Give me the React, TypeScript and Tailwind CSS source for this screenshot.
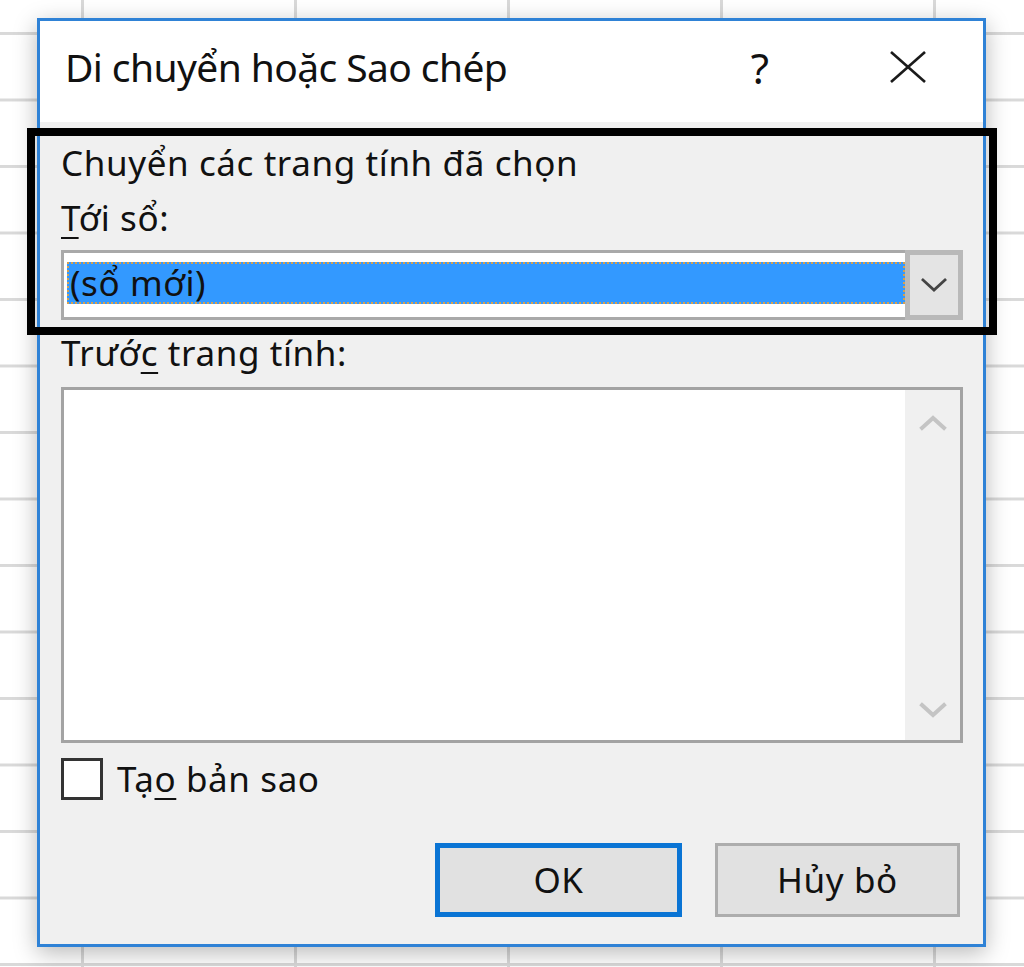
import React from "react";

function Chevron({ dir, className }: { dir: "up" | "down"; className: string }) {
  return (
    <svg viewBox="0 0 28 16" className={className} fill="none" strokeLinecap="square">
      <polyline points={dir === "down" ? "3,3 14,13 25,3" : "3,13 14,3 25,13"} />
    </svg>
  );
}

export default function App() {
  return (
    <div className="relative h-[967px] w-[1024px] overflow-hidden bg-white bg-[image:linear-gradient(to_right,#d9d9d9_3px,transparent_3px),linear-gradient(to_bottom,#d9d9d9_3px,transparent_3px)] bg-[length:213px_66.5px] bg-[position:81px_32px] pl-[37px] pt-[18px] font-['Noto_Sans',sans-serif] text-[#111]">
      <div className="flex h-[929px] w-[949px] flex-col border-[3px] border-[#2f82d6] bg-[#f0f0f0] shadow-[0_6px_22px_rgba(0,0,0,0.28)]">
        {/* title bar */}
        <div className="flex h-[101px] items-center bg-white pb-[10px] pl-[25px]">
          <span className="flex-1 text-[39px] leading-[48px] tracking-[-0.6px]">Di chuyển hoặc Sao chép</span>
          <span className="mr-[121px] mt-[2px] text-[42px] leading-[48px]">?</span>
          <svg viewBox="0 0 36 32" className="mr-[57px] h-[32px] w-[36px]" stroke="#1a1a1a" strokeWidth="2.6">
            <line x1="1" y1="1" x2="35" y2="31" />
            <line x1="35" y1="1" x2="1" y2="31" />
          </svg>
        </div>

        {/* body */}
        <div className="flex flex-1 flex-col pl-[21px] pr-[20px] pt-[21px] text-[35px] leading-[40px] tracking-[0.6px]">
          <div>Chuyển các trang tính đã chọn</div>
          <div className="mt-[15px]">
            <span className="underline decoration-2 underline-offset-[6px]">T</span>ới sổ:
          </div>

          <div className="mt-[12px] flex h-[70px]">
            <div className="flex flex-1 border-y-[3px] border-l-[3px] border-[#a9a9a9] bg-white pl-[3px] pt-[9px]">
              <div className="flex h-[42px] flex-1 items-center border-2 border-dotted border-[#d8a04e] bg-[#3399ff] pl-[1px] leading-[40px]">
                (sổ mới)
              </div>
            </div>
            <div className="flex w-[58px] items-center justify-center border-[5px] border-[#b9b9b9] bg-[#e4e4e4]">
              <Chevron dir="down" className="h-[16px] w-[28px] stroke-[#444] stroke-[2.8]" />
            </div>
          </div>

          <div className="mt-[13px]">
            Trướ<span className="underline decoration-2 underline-offset-[6px]">c</span> trang tính:
          </div>

          <div className="mt-[14px] flex h-[356px] border-[3px] border-[#a3a3a3] bg-white">
            <div className="flex-1" />
            <div className="flex w-[55px] flex-col items-center justify-between bg-[#f0f0f0] pb-[22px] pt-[25px]">
              <Chevron dir="up" className="h-[16px] w-[28px] stroke-[#c4c4c4] stroke-[4]" />
              <Chevron dir="down" className="h-[16px] w-[28px] stroke-[#c4c4c4] stroke-[4]" />
            </div>
          </div>

          <div className="mt-[15px] flex items-center">
            <div className="h-[42px] w-[42px] border-[3px] border-[#333] bg-white" />
            <span className="ml-[14px]">
              Tạ<span className="underline decoration-2 underline-offset-[6px]">o</span> bản sao
            </span>
          </div>

          <div className="mr-[3px] mt-[43px] flex justify-end gap-[33px]">
            <button className="flex h-[74px] w-[247px] items-center justify-center border-[5px] border-[#0a74d4] bg-[#e1e1e1] text-[35px]">
              OK
            </button>
            <button className="flex h-[74px] w-[245px] items-center justify-center border-[3px] border-[#adadad] bg-[#e1e1e1] text-[35px]">
              Hủy bỏ
            </button>
          </div>
        </div>
      </div>

      {/* annotation frame */}
      <div className="absolute left-[27px] top-[128px] h-[207px] w-[970px] border-[8px] border-black" />
    </div>
  );
}
